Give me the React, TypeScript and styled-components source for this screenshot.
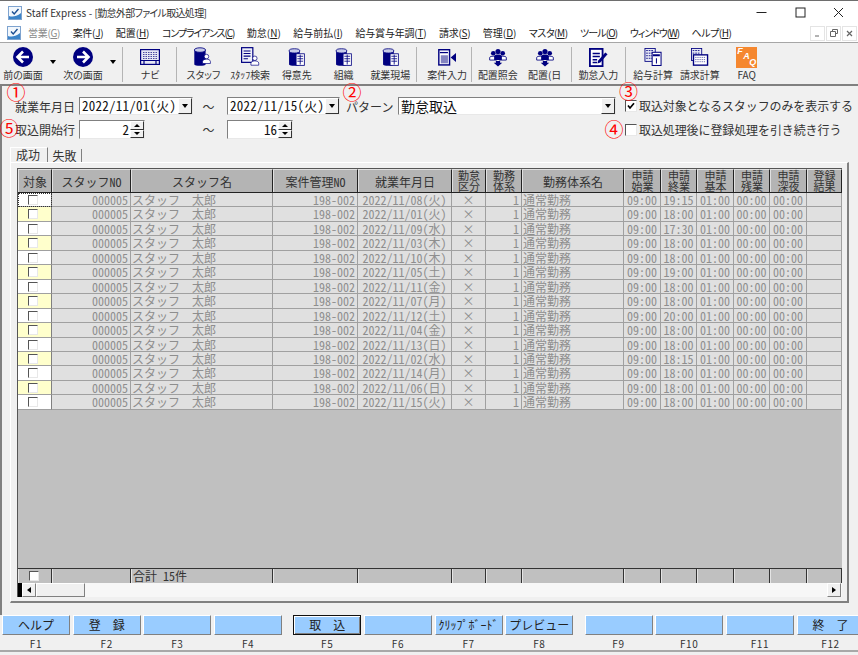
import React from "react";
import styled, { createGlobalStyle, css } from "styled-components";

const Global = createGlobalStyle`
  html, body { margin: 0; padding: 0; background: #f0f0f0; }
  * { box-sizing: border-box; }
`;
const ui = `"Noto Sans CJK JP", "Noto Sans", sans-serif`;
const NAVY = "#000080";
const COLS = "34px 79px 142px 85px 94px 34px 36px 102px 37px 36px 37px 36px 37px 35px";

const Page = styled.div`
  width: 858px; height: 655px; overflow: hidden; background: #f0f0f0;
  display: flex; flex-direction: column; position: relative;
  font-family: ${ui}; color: #000;
`;
const TitleBar = styled.div`
  height: 24px; flex: none; background: #fff; border-top: 1px solid #6e6e6e;
  display: flex; align-items: center; padding-left: 8px; font-size: 10px; color: #333;
  font-feature-settings: "palt";
`;
const TitleText = styled.span`margin-left: 4px; flex: 1; letter-spacing: 0.1px;`;
const TitleDoc = styled.span`letter-spacing: -0.7px;`;
const WinButton = styled.div`
  width: 38.5px; height: 23px; display: flex; align-items: center; justify-content: center;
`;
const MenuBar = styled.div`
  height: 19px; flex: none; background: #fff; display: flex; align-items: center;
  padding-left: 7px; border-bottom: 1px solid #a6a6a6;
`;
const MenuItems = styled.div`
  display: flex; gap: 12.5px; margin-left: 7px; flex: 1; font-size: 10px; font-feature-settings: "palt";
  line-height: 14px;
`;
const MenuItem = styled.span<{ $off?: boolean; $ls?: number }>`
  color: ${(p) => (p.$off ? "#8a8a8a" : "#222")};
  letter-spacing: ${(p) => p.$ls ?? 0}px;
  white-space: nowrap;
  u { text-underline-offset: 1px; }
`;
const MdiButtons = styled.div`display: flex; gap: 1px; margin-right: 1px;`;
const MdiButton = styled.div`
  width: 15px; height: 15px; background: #fff; border: 1px solid #e4e4e4;
  display: flex; align-items: center; justify-content: center;
`;
const ToolBar = styled.div`height: 41px; flex: none; display: flex; background: #f0f0f0;`;
const ToolButton = styled.div<{ $w?: number }>`
  width: ${(p) => p.$w ?? 46.75}px; flex: none; display: flex; flex-direction: column; align-items: center;
`;
const ToolIcon = styled.div`
  height: 25px; padding-top: 3px; display: flex; justify-content: center; align-items: center;
`;
const ToolLabel = styled.div`
  font-size: 10px; line-height: 14px; white-space: nowrap; color: #333; font-feature-settings: "palt";
`;
const DropArrow = styled.div`
  width: 14px; flex: none; display: flex; justify-content: center; padding-top: 17px;
  &::after { content: ""; border: 3px solid transparent; border-top: 4px solid #000; border-bottom: 0; height: 0; }
`;
const ToolSep = styled.div<{ $l: number; $r: number }>`
  width: 1px; height: 35px; margin: 4px ${(p) => p.$r}px 0 ${(p) => p.$l}px; background: #b4b4b4; flex: none;
`;
const Main = styled.div`
  height: 531px; flex: none; border-top: 2px solid #808080; border-left: 2px solid #808080;
  display: flex; flex-direction: column;
`;
const Filter = styled.div`
  display: grid; margin: 11px 0 0 13px; row-gap: 5px; font-size: 12px; color: #333;
  grid-template-columns: 64px 114px 34px 113px 58px 218px auto;
  grid-template-rows: 18px 19px;
  align-items: center;
  font-feature-settings: "hwid";
`;
const FieldLabel = styled.div<{ $col: number; $row: number }>`
  grid-column: ${(p) => p.$col}; grid-row: ${(p) => p.$row}; white-space: nowrap; line-height: 16px; padding-top: 1px;
  ${(p) => p.$col === 5 && css`padding-left: 6px;`}
`;
const Tilde = styled(FieldLabel)`
  text-align: center; padding-right: 3px; font-size: 12px; font-feature-settings: normal;
`;
const sunken = css`
  border-top: 1px solid #808080; border-left: 1px solid #808080;
  border-right: 1px solid #e8e8e8; border-bottom: 1px solid #e8e8e8;
`;
const Combo = styled.div<{ $col: number; $big?: boolean }>`
  grid-column: ${(p) => p.$col}; grid-row: 1; height: 18px; background: #fff; ${sunken}
  display: flex; align-items: center; padding-left: 2px;
  font-size: ${(p) => (p.$big ? 14 : 13)}px; color: #111; white-space: nowrap;
  letter-spacing: ${(p) => (p.$big ? 0 : 0.25)}px;
`;
const ComboText = styled.span`flex: 1; line-height: 16px;`;
const ComboBtn = styled.div`
  width: 14px; height: 16px; flex: none; background: #f0f0f0; display: flex; align-items: center; justify-content: center;
  border-right: 1px solid #333; border-bottom: 1px solid #333; border-top: 1px solid #fff; border-left: 1px solid #fff;
  &::after { content: ""; border: 3px solid transparent; border-top: 4px solid #000; border-bottom: 0; height: 0; }
`;
const Spin = styled.div<{ $col: number; $w: number }>`
  grid-column: ${(p) => p.$col}; grid-row: 2; width: ${(p) => p.$w}px; height: 19px; background: #fff; ${sunken}
  display: flex; align-items: center; font-size: 13px; color: #111;
`;
const SpinText = styled.span`flex: 1; text-align: right; padding-right: 1px; line-height: 16px;`;
const SpinBtns = styled.div`width: 14px; height: 17px; flex: none; display: flex; flex-direction: column;`;
const SpinBtn = styled.div<{ $up?: boolean }>`
  flex: 1; background: #f0f0f0; display: flex; align-items: center; justify-content: center;
  border-right: 1px solid #333; border-bottom: 1px solid #333; border-top: 1px solid #fff; border-left: 1px solid #fff;
  &::after {
    content: ""; height: 0; border: 3px solid transparent; 
    ${(p) => (p.$up ? "border-bottom: 3px solid #000; border-top: 0;" : "border-top: 3px solid #000; border-bottom: 0;")}
  }
`;
const CheckRow = styled.div<{ $row: number }>`
  grid-column: 7; grid-row: ${(p) => p.$row}; margin-left: 9px; display: flex; align-items: center;
  gap: 2px; white-space: nowrap; line-height: 16px; letter-spacing: -0.1px;
`;
const Box = styled.div<{ $size?: number }>`
  width: ${(p) => p.$size ?? 12}px; height: ${(p) => p.$size ?? 12}px; flex: none; background: #fff; ${sunken}
  display: flex; align-items: center; justify-content: center; border-top-color: #555; border-left-color: #555;
`;
const TabStrip = styled.div`
  display: flex; margin: 8px 0 0 8px; height: 15px; font-size: 12px; color: #333; align-items: flex-end;
`;
const Tab = styled.div<{ $on?: boolean }>`
  height: ${(p) => (p.$on ? 15 : 13)}px; line-height: 14px;
  width: ${(p) => (p.$on ? 38 : 34)}px; text-align: center;
  border-right: 1px solid #808080;
  ${(p) => p.$on && css`border-left: 1px solid #fff; border-top: 1px solid #fff; padding-right: 2px;`}
`;
const Panel = styled.div`
  margin-left: 8px; width: 839px; height: 441px; padding: 5px 0 0 6px;
  border-top: 1px solid #fff; border-left: 1px solid #fff;
  border-right: 2px solid #808080; border-bottom: 2px solid #808080;
`;
const Grid = styled.div`
  width: 825px; height: 429px; background: #c0c0c0; display: flex; flex-direction: column;
  border-top: 1px solid #555; border-left: 1px solid #555; font-size: 12px;
  font-feature-settings: "hwid";
`;
const rowBase = css`display: grid; grid-template-columns: ${COLS}; flex: none;`;
const HeaderRow = styled.div`${rowBase} height: 24px; border-bottom: 1px solid #222;`;
const HeadCell = styled.div<{ $small?: boolean }>`
  background: #b4b4b4; color: #333; display: flex; align-items: center; justify-content: center; text-align: center;
  border-right: 1px solid #222; border-left: 1px solid #e0e0e0; border-top: 1px solid #e0e0e0;
  line-height: 11px; white-space: pre-line; font-size: ${(p) => (p.$small ? 11 : 12)}px;
`;
const Row = styled.div<{ $h: number }>`${rowBase} height: ${(p) => p.$h}px;`;
const Cell = styled.div<{ $align?: "right" | "center"; $wide?: boolean }>`
  background: #e0e0e0; color: #8e8e8e; border-right: 1px solid #a0a0a0; border-bottom: 1px solid #a0a0a0;
  line-height: 13px; white-space: pre; padding: 0 ${(p) => (p.$align === "right" ? 2 : 1)}px 0 1px;
  text-align: ${(p) => p.$align ?? "left"};
  ${(p) => p.$wide && css`font-feature-settings: normal;`}
`;
const CheckCell = styled.div<{ $tint: boolean; $focus?: boolean }>`
  background: ${(p) => (p.$tint ? "#ffffcc" : "#fff")};
  border-right: 1px solid #808080; border-bottom: 1px solid #a0a0a0;
  display: flex; align-items: center; justify-content: center; padding-right: 3px;
  ${(p) => p.$focus && css`outline: 1px dotted #333; outline-offset: -1px;`}
`;
const Empty = styled.div`flex: 1;`;
const FootRow = styled.div`${rowBase} height: 15px; border-top: 1px solid #333;`;
const FootCell = styled.div<{ $check?: boolean }>`
  border-right: 1px solid #333; border-left: 1px solid #e4e4e4; color: #333; line-height: 14px; padding-left: 1px;
  ${(p) => p.$check && css`display: flex; align-items: center; justify-content: center; padding-right: 3px;`}
`;
const ScrollBar = styled.div`
  height: 14px; flex: none; background: #f7f7f7; display: flex; padding-right: 1px;
  border-left: 4px solid #000;
`;
const ScrollBtn = styled.div`
  width: 14px; background: #f0f0f0; display: flex; align-items: center; justify-content: center;
  border-right: 1px solid #808080; border-bottom: 1px solid #808080; border-top: 1px solid #fff; border-left: 1px solid #fff;
`;
const Thumb = styled.div`
  width: 49px; background: #f0f0f0;
  border-right: 1px solid #808080; border-bottom: 1px solid #808080; border-top: 1px solid #fff; border-left: 1px solid #fff;
`;
const Track = styled.div`flex: 1;`;
const Tri = styled.div<{ $left?: boolean }>`
  height: 0; border: 3px solid transparent;
  ${(p) => (p.$left ? "border-right: 4px solid #000; border-left: 0;" : "border-left: 4px solid #000; border-right: 0;")}
`;
const FKeys = styled.div`
  height: 37px; flex: none; display: flex; padding-left: 2px; gap: 2.7px; align-items: flex-start;
`;
const FKey = styled.div<{ $gap?: boolean }>`
  width: 68px; flex: none; display: flex; flex-direction: column; align-items: center;
  ${(p) => p.$gap && css`margin-left: 8.5px;`}
`;
const FButton = styled.button<{ $focus?: boolean }>`
  all: unset; box-sizing: border-box; width: 68px; height: 20px; background: #99ccff; color: #222; font-family: ${ui};
  font-size: 12px; text-align: center; line-height: 18px; white-space: pre;
  border-right: 1px solid #808080; border-bottom: 1px solid #808080; border-top: 1px solid #fff; border-left: 1px solid #fff;
  ${(p) => p.$focus && css`border: 1px solid #111; box-shadow: inset 1px 1px 0 #fff, inset -1px -1px 0 #808080;`}
`;
const FName = styled.div`
  font-size: 10px; line-height: 12px; margin-top: 3px; color: #333; letter-spacing: 0.6px;
`;
const BottomLine = styled.div`height: 2px; flex: none; background: #a8a8a8; margin-top: -2px;`;
const Mark = styled.span<{ $x: number; $y: number }>`
  position: absolute; left: ${(p) => p.$x}px; top: ${(p) => p.$y}px; width: 20px; height: 20px; line-height: 20px;
  text-align: center; color: #f00; font-size: 19px; font-family: ${ui};
  transform: translate(-50%, -50%);
`;
const FaqBox = styled.div`
  width: 21px; height: 21px; background: #f5872f; position: relative; color: #fff; font-family: "Liberation Sans", sans-serif;
  font-weight: bold; font-style: italic; font-size: 9px; line-height: 9px;
`;
const FaqLetter = styled.span<{ $x: number; $y: number }>`
  position: absolute; left: ${(p) => p.$x}px; top: ${(p) => p.$y}px;
`;

const AppLogo = () => (
  <svg width="14" height="14" viewBox="0 0 14 14">
    <rect x="0.5" y="0.5" width="13" height="13" fill="#f2f7fc" stroke="#7ea3cf" />
    <path d="M1 10C4 11 8 11 13 7V13H1Z" fill="#3c84c8" />
    <path d="M4 5.5L6.2 8L10.5 3" fill="none" stroke="#1c4f92" strokeWidth="1.4" />
  </svg>
);
const ArrowCircle = ({ dir }: { dir: "l" | "r" }) => (
  <svg width="22" height="22" viewBox="0 0 22 22">
    <circle cx="11" cy="11" r="10" fill={NAVY} />
    <path
      d={dir === "l" ? "M17 11H6M11 5.5L5.5 11L11 16.5" : "M5 11H16M11 5.5L16.5 11L11 16.5"}
      fill="none" stroke="#fff" strokeWidth="2.6"
    />
  </svg>
);
const NaviIcon = () => (
  <svg width="20" height="16" viewBox="0 0 20 16">
    <rect x="0.6" y="0.6" width="18.8" height="14.8" fill="#e6e8f5" stroke={NAVY} strokeWidth="1.2" />
    <path d="M3 3.5h14M3 5.5h14M3 7.5h14M3 9.5h14" stroke="#4a4aa0" strokeWidth="1" strokeDasharray="1.5 1" />
    <path d="M0 11.5h20M4 11.5v4M16 11.5v4" stroke={NAVY} strokeWidth="1.2" />
  </svg>
);
const Person = ({ x, y }: { x: number; y: number }) => (
  <g transform={`translate(${x} ${y})`}>
    <circle cx="5" cy="3" r="2.6" fill="#fff" stroke={NAVY} strokeWidth="0.8" />
    <path d="M0.5 11V8.6C0.5 6.8 3 6 5 6S9.5 6.8 9.5 8.6V11Z" fill="#fff" stroke={NAVY} strokeWidth="0.8" />
  </g>
);
const Cylinder = () => (
  <>
    <path d="M1 4V20C1 22 14 22 14 20V4Z" fill={NAVY} />
    <ellipse cx="7.5" cy="3.5" rx="6.5" ry="2.6" fill="#c7cbe8" stroke={NAVY} />
  </>
);
const StaffIcon = () => (
  <svg width="20" height="20" viewBox="0 0 22 23">
    <Cylinder />
    <Person x={10} y={8} />
  </svg>
);
const StaffSearchIcon = () => (
  <svg width="19" height="20" viewBox="0 0 22 23">
    <rect x="0.7" y="0.7" width="13" height="17" fill="#eef0fa" stroke={NAVY} strokeWidth="1.4" />
    <path d="M3 4.5h8M3 7.5h8M3 10.5h8M3 13.5h5" stroke={NAVY} strokeWidth="1.2" />
    <Person x={11} y={10} />
  </svg>
);
const OrgIcon = () => (
  <svg width="17" height="19" viewBox="0 0 20 23">
    <Cylinder />
    <rect x="9.5" y="7" width="10" height="14" fill="#fff" stroke={NAVY} />
    <path d="M11 10h7M11 13h7M11 16h7M14.5 8v12" stroke={NAVY} strokeWidth="1" />
  </svg>
);
const CaseIcon = () => (
  <svg width="19" height="17" viewBox="0 0 21 19">
    <rect x="0.8" y="0.8" width="12" height="17" fill="#fff" stroke={NAVY} strokeWidth="1.6" />
    <rect x="3" y="7" width="8" height="9" fill="#8484c0" />
    <path d="M2 4h9" stroke={NAVY} strokeWidth="1.4" />
    <path d="M14 9.5L20 4.5V14.5Z" fill={NAVY} />
  </svg>
);
const GroupIcon = () => (
  <svg width="18" height="19" viewBox="0 0 21 22">
    <circle cx="5" cy="6" r="2.7" fill={NAVY} />
    <circle cx="16" cy="6" r="2.7" fill={NAVY} />
    <path d="M0.8 14V11C0.8 9 9 9 9 11V14Z" fill="#fff" stroke={NAVY} />
    <path d="M12 14V11C12 9 20.2 9 20.2 11V14Z" fill="#fff" stroke={NAVY} />
    <circle cx="10.5" cy="4" r="3" fill={NAVY} />
    <path d="M6 14V9.5C6 7 15 7 15 9.5V14Z" fill={NAVY} />
    <path d="M8 15h5v2h2.5l-5 4.5-5-4.5H8Z" fill={NAVY} />
  </svg>
);
const AttendIcon = () => (
  <svg width="19" height="19" viewBox="0 0 21 21">
    <rect x="1" y="1" width="14" height="19" fill="#fff" stroke={NAVY} strokeWidth="2" />
    <path d="M4 6h8M4 9.5h8M4 13h5M4 16h5" stroke={NAVY} strokeWidth="1.6" />
    <path d="M10 14L18 5L20.5 7L12.5 16L9.5 17Z" fill={NAVY} />
  </svg>
);
const PayIcon = () => (
  <svg width="18" height="18" viewBox="0 0 20 21">
    <rect x="0.6" y="0.6" width="12" height="15" fill="#e8eaf6" stroke={NAVY} />
    <path d="M2 3h9M2 6h9M2 9h9M2 12h9" stroke={NAVY} strokeWidth="1" strokeDasharray="2 1" />
    <rect x="9" y="5" width="10.4" height="15.4" fill="#fff" stroke={NAVY} strokeWidth="1.2" />
    <path d="M10 9h8M14 12v6M10 8h8" stroke={NAVY} strokeWidth="1.2" />
  </svg>
);
const BillIcon = () => (
  <svg width="19" height="18" viewBox="0 0 20 21">
    <rect x="0.6" y="0.6" width="12" height="14" fill="#e8eaf6" stroke={NAVY} />
    <path d="M2 3h9M2 6h9" stroke={NAVY} strokeWidth="1" strokeDasharray="2 1" />
    <rect x="3" y="8" width="16.4" height="12" fill="#fff" stroke={NAVY} strokeWidth="1.6" />
    <path d="M5 11h12M5 13.5h12M5 16h12" stroke="#5a5aa8" strokeWidth="1" strokeDasharray="1.5 1" />
  </svg>
);
const FaqIcon = () => (
  <FaqBox>
    <FaqLetter $x={1} $y={0}>F</FaqLetter>
    <FaqLetter $x={7} $y={5}>A</FaqLetter>
    <FaqLetter $x={13} $y={11}>Q</FaqLetter>
  </FaqBox>
);
const Tick = () => (
  <svg width="8" height="8" viewBox="0 0 8 8"><path d="M1 3.5L3 6L7 1.2" fill="none" stroke="#000" strokeWidth="1.7" /></svg>
);

const menus: [string, string, number][] = [
  ["案件", "J", -0.3], ["配置", "H", -0.1], ["コンプライアンス", "C", -1.1], ["勤怠", "N", 0], ["給与前払", "I", 0], ["給与賞与年調", "T", -0.2],
  ["請求", "S", -0.3], ["管理", "D", 0], ["マスタ", "M", -0.5], ["ツール", "O", -0.9], ["ウィンドウ", "W", -1.1], ["ヘルプ", "H", -0.5],
];
const rows: [string, string, number][] = [
  ["11/08(火)", "19:15", 14], ["11/01(火)", "18:00", 15], ["11/09(水)", "17:30", 14], ["11/03(木)", "18:00", 15], ["11/10(木)", "18:00", 14],
  ["11/05(土)", "19:00", 15], ["11/11(金)", "18:00", 14], ["11/07(月)", "18:00", 15], ["11/12(土)", "20:00", 14], ["11/04(金)", "18:00", 15],
  ["11/13(日)", "18:00", 14], ["11/02(水)", "18:15", 14], ["11/14(月)", "18:00", 15], ["11/06(日)", "18:00", 14], ["11/15(火)", "18:00", 15],
];
const heads = [
  "対象", "スタッフNO", "スタッフ名", "案件管理NO", "就業年月日", "勤怠\n区分", "勤務\n体系", "勤務体系名",
  "申請\n始業", "申請\n終業", "申請\n基本", "申請\n残業", "申請\n深夜", "登録\n結果",
];
const fkeys: { n: string; t: string; gap?: boolean; focus?: boolean }[] = [
  { n: "F1", t: "ヘルプ" }, { n: "F2", t: "登　録" }, { n: "F3", t: "" }, { n: "F4", t: "" },
  { n: "F5", t: "取　込", gap: true, focus: true }, { n: "F6", t: "" }, { n: "F7", t: "ｸﾘｯﾌﾟﾎﾞｰﾄﾞ" }, { n: "F8", t: "プレビュー" },
  { n: "F9", t: "", gap: true }, { n: "F10", t: "" }, { n: "F11", t: "" }, { n: "F12", t: "終　了" },
];

const Tool = ({ icon, label, w }: { icon: React.ReactNode; label: string; w?: number }) => (
  <ToolButton $w={w}>
    <ToolIcon>{icon}</ToolIcon>
    <ToolLabel>{label}</ToolLabel>
  </ToolButton>
);

export default function App() {
  return (
    <Page>
      <Global />
      <TitleBar>
        <AppLogo />
        <TitleText>Staff Express - <TitleDoc>[勤怠外部ファイル取込処理]</TitleDoc></TitleText>
        <WinButton><svg width="11" height="11"><path d="M0.5 5.5h10" stroke="#222" /></svg></WinButton>
        <WinButton><svg width="11" height="11"><rect x="1" y="1" width="9" height="9" fill="none" stroke="#222" /></svg></WinButton>
        <WinButton><svg width="11" height="11"><path d="M1 1L10 10M10 1L1 10" stroke="#222" /></svg></WinButton>
      </TitleBar>
      <MenuBar>
        <AppLogo />
        <MenuItems>
          <MenuItem $off $ls={-0.3}>営業(<u>G</u>)</MenuItem>
          {menus.map(([a, k, ls]) => (
            <MenuItem key={a} $ls={ls}>{a}(<u>{k}</u>)</MenuItem>
          ))}
        </MenuItems>
        <MdiButtons>
          <MdiButton><svg width="7" height="7"><path d="M1 6h4" stroke="#666" /></svg></MdiButton>
          <MdiButton><svg width="8" height="8"><path d="M2.5 2.5v-2h5v4h-2M0.5 2.5h5v5h-5z" fill="none" stroke="#666" /></svg></MdiButton>
          <MdiButton><svg width="7" height="7"><path d="M1 1L6 6M6 1L1 6" stroke="#666" strokeWidth="1.2" /></svg></MdiButton>
        </MdiButtons>
      </MenuBar>
      <ToolBar>
        <Tool w={46} icon={<ArrowCircle dir="l" />} label="前の画面" />
        <DropArrow />
        <Tool w={46} icon={<ArrowCircle dir="r" />} label="次の画面" />
        <DropArrow />
        <ToolSep $l={2} $r={4} />
        <Tool w={46} icon={<NaviIcon />} label="ナビ" />
        <ToolSep $l={3} $r={3} />
        <Tool icon={<StaffIcon />} label="スタッフ" />
        <Tool icon={<StaffSearchIcon />} label="ｽﾀｯﾌ検索" />
        <Tool icon={<OrgIcon />} label="得意先" />
        <Tool icon={<OrgIcon />} label="組織" />
        <Tool icon={<OrgIcon />} label="就業現場" />
        <ToolSep $l={2} $r={7} />
        <Tool icon={<CaseIcon />} label="案件入力" />
        <ToolSep $l={0} $r={3} />
        <Tool icon={<GroupIcon />} label="配置照会" />
        <Tool icon={<GroupIcon />} label="配置(日" />
        <ToolSep $l={3} $r={3} />
        <Tool icon={<AttendIcon />} label="勤怠入力" />
        <ToolSep $l={3} $r={4} />
        <Tool icon={<PayIcon />} label="給与計算" />
        <Tool icon={<BillIcon />} label="請求計算" />
        <Tool icon={<FaqIcon />} label="FAQ" />
      </ToolBar>
      <Main>
        <Filter>
          <FieldLabel $col={1} $row={1}>就業年月日</FieldLabel>
          <Combo $col={2}><ComboText>2022/11/01(火)</ComboText><ComboBtn /></Combo>
          <Tilde $col={3} $row={1}>～</Tilde>
          <Combo $col={4}><ComboText>2022/11/15(火)</ComboText><ComboBtn /></Combo>
          <FieldLabel $col={5} $row={1}>パターン</FieldLabel>
          <Combo $col={6} $big><ComboText>勤怠取込</ComboText><ComboBtn /></Combo>
          <CheckRow $row={1}><Box><Tick /></Box>取込対象となるスタッフのみを表示する</CheckRow>
          <FieldLabel $col={1} $row={2}>取込開始行</FieldLabel>
          <Spin $col={2} $w={66}><SpinText>2</SpinText><SpinBtns><SpinBtn $up /><SpinBtn /></SpinBtns></Spin>
          <Tilde $col={3} $row={2}>～</Tilde>
          <Spin $col={4} $w={66}><SpinText>16</SpinText><SpinBtns><SpinBtn $up /><SpinBtn /></SpinBtns></Spin>
          <CheckRow $row={2}><Box />取込処理後に登録処理を引き続き行う</CheckRow>
        </Filter>
        <TabStrip>
          <Tab $on>成功</Tab>
          <Tab>失敗</Tab>
        </TabStrip>
        <Panel>
          <Grid>
            <HeaderRow>
              {heads.map((h) => <HeadCell key={h} $small={h.includes("\n")}>{h}</HeadCell>)}
            </HeaderRow>
            {rows.map(([d, t, h], i) => (
              <Row key={d} $h={h}>
                <CheckCell $tint={i % 2 === 1} $focus={i === 0}><Box $size={10} /></CheckCell>
                <Cell $align="right">000005</Cell>
                <Cell $wide>スタッフ　太郎</Cell>
                <Cell $align="right">198-002</Cell>
                <Cell $align="center">2022/{d}</Cell>
                <Cell $align="center">×</Cell>
                <Cell $align="right">1</Cell>
                <Cell>通常勤務</Cell>
                <Cell $align="center">09:00</Cell>
                <Cell $align="center">{t}</Cell>
                <Cell $align="center">01:00</Cell>
                <Cell $align="center">00:00</Cell>
                <Cell $align="center">00:00</Cell>
                <Cell />
              </Row>
            ))}
            <Empty />
            <FootRow>
              {heads.map((h, i) => (
                <FootCell key={h} $check={i === 0}>
                  {i === 0 && <Box $size={10} />}
                  {i === 2 && "合計 15件"}
                </FootCell>
              ))}
            </FootRow>
            <ScrollBar>
              <ScrollBtn><Tri $left /></ScrollBtn>
              <Thumb />
              <Track />
              <ScrollBtn><Tri /></ScrollBtn>
            </ScrollBar>
          </Grid>
        </Panel>
      </Main>
      <FKeys>
        {fkeys.map((k) => (
          <FKey key={k.n} $gap={k.gap}>
            <FButton $focus={k.focus}>{k.t}</FButton>
            <FName>{k.n}</FName>
          </FKey>
        ))}
      </FKeys>
      <BottomLine />
      <Mark $x={16} $y={92}>①</Mark>
      <Mark $x={352} $y={92}>②</Mark>
      <Mark $x={628.5} $y={91}>③</Mark>
      <Mark $x={614} $y={129}>④</Mark>
      <Mark $x={9} $y={128}>⑤</Mark>
    </Page>
  );
}
